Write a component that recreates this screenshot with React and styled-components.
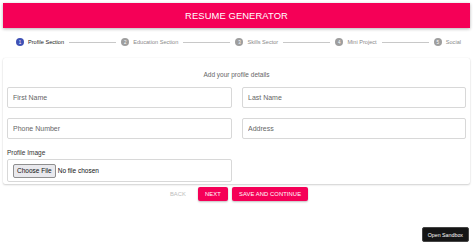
import React from 'react';
import styled, { createGlobalStyle } from 'styled-components';

const GlobalStyle = createGlobalStyle`
  body {
    margin: 0;
    background: #fff;
    font-family: "Liberation Sans", Arial, sans-serif;
  }
`;

const Page = styled.div`
  width: 474px;
  height: 248px;
  position: relative;
  overflow: hidden;
  padding-top: 3px;
  box-sizing: border-box;
`;

const Header = styled.header`
  margin: 0 4px 0 3px;
  height: 25px;
  background: #f50057;
  color: #fff;
  font-size: 9.4px;
  display: flex;
  align-items: center;
  justify-content: center;
  box-shadow: 0 1px 3px rgba(0, 0, 0, 0.3);
  letter-spacing: 0.1px;
`;

const Stepper = styled.div`
  display: flex;
  align-items: center;
  padding: 0 13px 0 16px;
  height: 28px;
`;

const Step = styled.div`
  display: flex;
  align-items: center;
  gap: 4px;
  font-size: 5.6px;
  color: ${({ $active }) => ($active ? '#222' : '#8a8a8a')};
  white-space: nowrap;
`;

const StepIcon = styled.span`
  width: 8px;
  height: 8px;
  border-radius: 50%;
  background: ${({ $active }) => ($active ? '#3f51b5' : '#9e9e9e')};
  color: #fff;
  font-size: 4.5px;
  display: flex;
  align-items: center;
  justify-content: center;
`;

const Connector = styled.span`
  flex: 1;
  height: 1px;
  background: #c8c8c8;
  margin: 0 5px;
`;

const Card = styled.section`
  margin: 2px 4px 0 3px;
  padding: 13px 4px 2px;
  box-shadow: 0 1px 2px rgba(0, 0, 0, 0.18), 0 0 1px rgba(0, 0, 0, 0.12);
  border-radius: 2px;
`;

const Subtitle = styled.div`
  text-align: center;
  font-size: 6.5px;
  color: #666;
  height: 8px;
  line-height: 8px;
  margin-bottom: 8px;
`;

const Grid = styled.div`
  display: grid;
  grid-template-columns: 225px 224px;
  column-gap: 10px;
  row-gap: 10px;
`;

const Input = styled.input`
  box-sizing: border-box;
  height: 21px;
  width: 100%;
  border: 1px solid #d8d8d8;
  border-radius: 2px;
  padding: 0 5px;
  font-family: inherit;
  font-size: 7px;
  outline: none;
  &::placeholder { color: #666; }
`;

const Label = styled.div`
  font-size: 6.5px;
  color: #333;
  margin-top: 10px;
  height: 8px;
  line-height: 8px;
`;

const FileBox = styled.div`
  box-sizing: border-box;
  width: 225px;
  height: 23px;
  margin-top: 2px;
  border: 1px solid #d8d8d8;
  border-radius: 2px;
  display: flex;
  align-items: center;
  padding-left: 5px;
  gap: 2px;
  font-size: 6.5px;
  color: #111;
`;

const FileButton = styled.span`
  height: 12px;
  padding: 0 3px;
  display: flex;
  align-items: center;
  border: 1px solid #8f8f8f;
  border-radius: 2px;
  background: #e9e9ed;
  font-size: 6.5px;
`;

const Actions = styled.div`
  display: flex;
  justify-content: center;
  gap: 4px;
  margin-top: 3px;
`;

const Button = styled.button`
  height: 14px;
  padding: 0 ${({ $pad }) => $pad || 7}px;
  border: none;
  border-radius: 2px;
  font-family: inherit;
  font-size: 5.8px;
  letter-spacing: 0.1px;
  background: ${({ $ghost }) => ($ghost ? 'transparent' : '#f50057')};
  color: ${({ $ghost }) => ($ghost ? '#bdbdbd' : '#fff')};
  box-shadow: ${({ $ghost }) => ($ghost ? 'none' : '0 1px 2px rgba(0,0,0,0.25)')};
  margin-right: ${({ $gap }) => $gap || 0}px;
`;

const Sandbox = styled.div`
  position: absolute;
  right: 5px;
  bottom: 6px;
  height: 13px;
  padding: 0 5px;
  display: flex;
  align-items: center;
  background: #151515;
  border: 1px solid #444;
  border-radius: 2px;
  color: #fff;
  font-size: 5.3px;
`;

const steps = ['Profile Section', 'Education Section', 'Skills Sector', 'Mini Project', 'Social'];

export default function App() {
  return (
    <Page>
      <GlobalStyle />
      <Header>RESUME GENERATOR</Header>
      <Stepper>
        {steps.map((s, i) => (
          <React.Fragment key={s}>
            {i > 0 && <Connector />}
            <Step $active={i === 0}>
              <StepIcon $active={i === 0}>{i + 1}</StepIcon>
              {s}
            </Step>
          </React.Fragment>
        ))}
      </Stepper>
      <Card>
        <Subtitle>Add your profile details</Subtitle>
        <Grid>
          <Input placeholder="First Name" />
          <Input placeholder="Last Name" />
          <Input placeholder="Phone Number" />
          <Input placeholder="Address" />
        </Grid>
        <Label>Profile Image</Label>
        <FileBox>
          <FileButton>Choose File</FileButton>
          No file chosen
        </FileBox>
      </Card>
      <Actions>
        <Button $ghost $pad={4} $gap={4}>BACK</Button>
        <Button>NEXT</Button>
        <Button>SAVE AND CONTINUE</Button>
      </Actions>
      <Sandbox>Open Sandbox</Sandbox>
    </Page>
  );
}
